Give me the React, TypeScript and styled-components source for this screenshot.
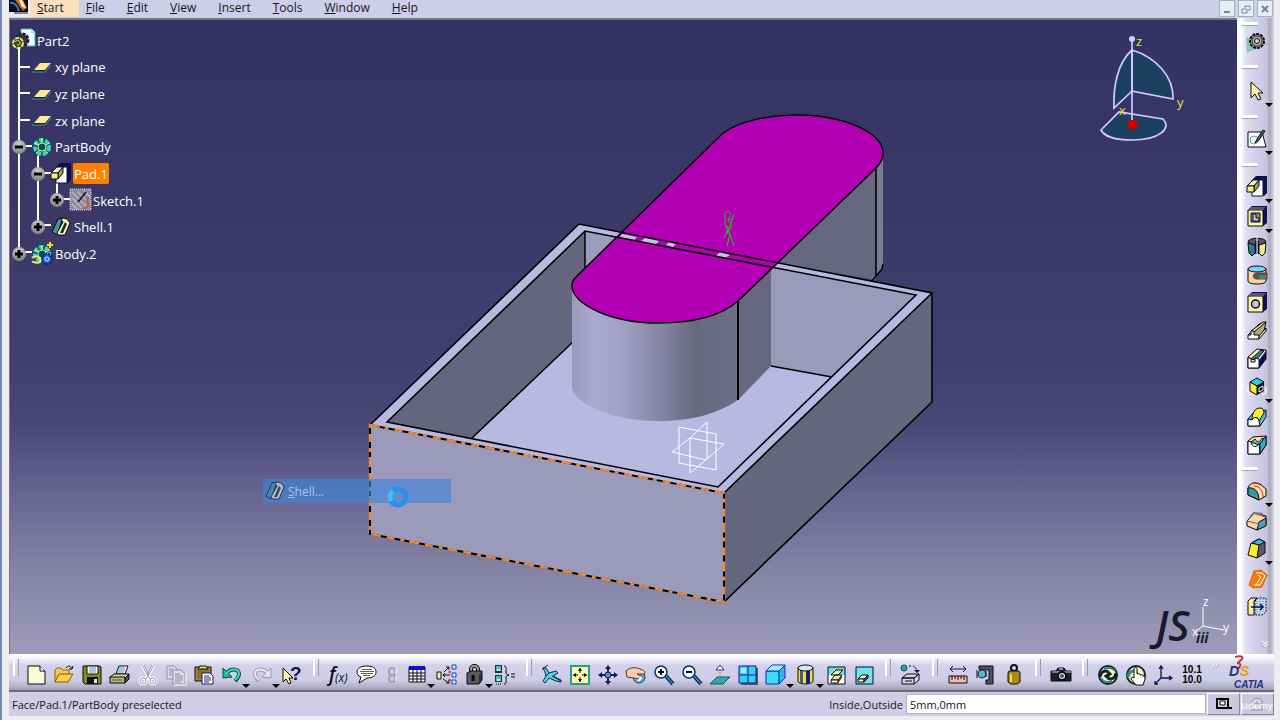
import React from "react";
import styled, { createGlobalStyle } from "styled-components";

const ui = `"Open Sans", "Noto Sans", sans-serif`;

const Global = createGlobalStyle`
  * { box-sizing: border-box; }
  body { margin: 0; font-family: ${ui}; font-size: 12px; color: #16161c; }
  button { font: inherit; color: inherit; border: 0; padding: 0; background: none; }
`;

const Frame = styled.div`
  display: flex;
  flex-direction: column;
  height: 100vh;
  overflow: hidden;
  padding: 0 6px 4px 7px;
  border-left: 2px solid #7388ae;
  background: #ededf1;
`;

const MenuBar = styled.header`
  display: flex;
  align-items: flex-start;
  height: 18px;
  background: #cfcee8;
`;

const MenuNav = styled.nav`
  display: flex;
  flex: 1;
`;

const MenuItem = styled.a<{ $active?: boolean }>`
  height: 17px;
  padding: 0 15px 0 7px;
  line-height: 16px;
  color: inherit;
  text-decoration: none;
  background: ${(p) => (p.$active ? "#fbdfbd" : "transparent")};
`;

const WindowButtons = styled.div`
  display: flex;
  gap: 3px;
  padding-right: 1px;
`;

const WindowButton = styled.button`
  display: grid;
  place-items: center;
  width: 16px;
  height: 17px;
  border: 1px solid #9fb4c4;
  background: #e6edf6;
`;

const Body = styled.div`
  display: flex;
  flex: 1;
  min-height: 0;
`;

const Viewport = styled.main`
  position: relative;
  flex: 1;
  min-width: 0;
  overflow: hidden;
  border-top: 2px solid #77777f;
  border-left: 1px solid #77777f;
  background: linear-gradient(#343263 0%, #3c3969 33%, #434071 55%, #4a4777 64%, #656390 74%, #8382a3 86%, #9e9cb9 100%);
`;

const Scene = styled.svg`
  display: block;
  width: 100%;
  height: 100%;
`;

const Compass = styled.svg`
  position: absolute;
  top: 10px;
  right: 47px;
`;

const Triad = styled.svg`
  position: absolute;
  right: 4px;
  bottom: 0;
`;

const Tree = styled.ul`
  position: absolute;
  top: 7px;
  left: 2px;
  display: grid;
  grid-auto-rows: 1fr;
  height: 240px;
  margin: 0;
  padding: 0;
  list-style: none;
  color: #fff;
  font-size: 13px;
`;

const TreeLines = styled.svg`
  position: absolute;
  top: 0;
  left: 0;
`;

const TreeRow = styled.li<{ $depth: number }>`
  position: relative;
  display: flex;
  align-items: center;
  padding-left: ${(p) => p.$depth * 19}px;
`;

const Toggle = styled.button`
  display: grid;
  place-items: center;
  width: 14px;
  height: 14px;
  margin-right: 4px;
  border-radius: 50%;
  background: radial-gradient(circle at 50% 30%, #cfcfcf, #6e6e70);
`;

const ToggleSpace = styled.span`
  width: 18px;
`;

const TreeIcon = styled.svg`
  position: relative;
  width: 24px;
  height: 24px;
`;

const TreeLabel = styled.span<{ $picked?: boolean }>`
  height: 21px;
  padding: 0 1px;
  border-radius: 2px;
  line-height: 22px;
  background: ${(p) => (p.$picked ? "#ff8000" : "transparent")};
`;

const ContextMenu = styled.div`
  position: absolute;
  top: 459px;
  left: 253px;
  width: 188px;
  background: rgba(62, 134, 220, 0.62);
`;

const ContextItem = styled.button`
  display: flex;
  align-items: center;
  gap: 1px;
  width: 100%;
  height: 24px;
  color: #b4c3e4;
`;

const Spinner = styled.svg`
  position: absolute;
  top: 2px;
  left: 119px;
  padding: 4px;
  overflow: visible;
`;

const Dock = styled.aside`
  display: flex;
  flex-direction: column;
  align-items: center;
  width: 37px;
  padding: 2px 0 0 3px;
  background: linear-gradient(90deg, #fff 0, #fff 4px, #dfdef0 9px, #d0cee8 20px, #c9c7e0 29px, #a9a8bb 33px, #dcdce6 37px);
`;

const DockGrip = styled.i<{ $size: number }>`
  align-self: flex-start;
  width: 18px;
  height: ${(p) => p.$size}px;
  padding-left: 2px;
  display: flex;
  align-items: center;
  &::after {
    content: "";
    flex: 1;
    height: 3px;
    border-bottom: 1px solid #a3a2b4;
    background: #fff;
  }
`;

const DockButton = styled.button<{ $drop?: boolean }>`
  position: relative;
  flex: none;
  width: 28px;
  height: ${(p) => (p.$drop ? 30 : 28)}px;
  padding: 1px 2px;
  display: flex;
`;

const Glyph = styled.svg`
  display: block;
  width: 24px;
  height: 24px;
  overflow: visible;
`;

const DropMark = styled.i`
  position: absolute;
  right: -2px;
  bottom: 1px;
  border: 4px solid transparent;
  border-top-color: #000;
  border-bottom: 0;
`;

const More = styled.button<{ $down?: boolean }>`
  width: 18px;
  margin: ${(p) => (p.$down ? "14px 0 0 20px" : "0")};
  color: #f4f4fc;
  font-size: 15px;
  line-height: 16px;
  text-shadow: 1px 1px #a7a6b8;
  transform: ${(p) => (p.$down ? "rotate(90deg)" : "none")};
`;

const ToolBar = styled.div`
  display: flex;
  align-items: flex-start;
  height: 38px;
  border-bottom: 2px solid #6c6b7c;
  background: linear-gradient(#fff 0, #f6f6fb 4px, #d3d2ea 11px, #cecce6 26px, #b3b1c6 33px, #9e9cb0 36px);
`;

const BarGrip = styled.i<{ $size: number }>`
  flex: none;
  display: flex;
  justify-content: center;
  width: ${(p) => p.$size}px;
  height: 22px;
  padding-top: 5px;
  &::after {
    content: "";
    width: 3px;
    border-left: 2px solid #fff;
    border-right: 1px solid #9c9bae;
  }
`;

const ToolGroup = styled.div`
  display: flex;
  padding-top: 7px;
`;

const ToolButton = styled.button<{ $drop?: boolean; $slim?: boolean }>`
  position: relative;
  flex: none;
  display: block;
  width: ${(p) => (p.$drop ? 30 : p.$slim ? 22 : 28)}px;
  height: 28px;
  padding: 2px ${(p) => (p.$slim ? 0 : 2)}px;
`;

const Coordinates = styled.span`
  display: grid;
  font: bold 10px/10px "Liberation Sans", Arial, sans-serif;
  color: #000;
`;

const Brand = styled.svg`
  margin-left: auto;
  margin-right: 3px;
`;

const StatusBar = styled.footer`
  display: flex;
  align-items: center;
  height: 24px;
  padding-left: 3px;
  background: #cfcee6;
  font-size: 11px;
`;

const Message = styled.output`
  flex: 1;
`;

const PowerLabel = styled.label`
  padding-right: 3px;
`;

const PowerInput = styled.input`
  width: 300px;
  height: 20px;
  padding: 0 3px;
  border: 1px solid #b5b4c8;
  background: #fff;
  font: inherit;
  color: inherit;
`;

const StatusButton = styled.button`
  position: relative;
  display: grid;
  place-items: center;
  width: 33px;
  height: 22px;
  margin-left: 1px;
  border: 1px solid;
  border-color: #fff #85849a #85849a #fff;
  background: #c9c8dc;
`;

const Watermark = styled.span`
  position: absolute;
  right: 0;
  bottom: 1px;
  color: rgba(255, 255, 255, 0.75);
  font: bold 9px/14px ${ui};
`;

const k = "#0a0a14";
const navy = "#10104e";
const cream = "#fdf6a8";

const cubeBack = (
  <>
    <path d="M4 4L7 1H22V18L18 21H3V5Z" fill={navy} />
    <path d="M3 5H18V21H3Z" fill={cream} stroke={k} />
    <path d="M3 5L6 2H21L18 5Z" fill="#56567a" />
  </>
);

const gear = (
  <>
    <circle cx="12" cy="12" r="9" fill="#14627a" stroke="#0c4a66" strokeWidth="2" strokeDasharray="3 3" />
    <circle cx="12" cy="12" r="7" fill="none" stroke="#3fd8b0" strokeWidth="4" strokeDasharray="4 2" />
    <circle cx="12" cy="12" r="4" fill="#0a4a68" stroke="#c8ee74" strokeWidth="1" />
    <path d="M4 8L9 10M20 8L15 10M12 3V8M6 18L10 15M18 18L14 15" stroke="#d8f08a" />
  </>
);

const shellShape = (
  <>
    <path d="M3 17L9 4L14 3L8 20Z" fill="#42929c" stroke={k} />
    <path d="M14 3L18 4L21 8L16 20H9L8 18L14 7L12 4Z" fill={cream} stroke={k} />
    <path d="M11 18L16 7L18 9L14 18Z" fill="#23235a" />
  </>
);

const padShape = (
  <>
    <path d="M8 4L11 1H22V18L19 21H8Z" fill={navy} />
    <path d="M7 5H18V21H7Z" fill="#fff" stroke={navy} />
    <path d="M2 11L8 5H14L9 11Z" fill="#fffbd0" stroke={k} />
    <path d="M9 11L14 5V11L9 17Z" fill="#a3a05c" stroke={k} />
    <path d="M2 11H9V17H2Z" fill="#f8f07c" stroke={k} />
  </>
);

const icons: Record<string, React.ReactNode> = {
  newDoc: (
    <>
      <path d="M4 3H16L21 8V21H4Z" fill="#fdf9d4" stroke={k} />
      <path d="M16 3V8H21" fill="#fff" stroke={k} />
    </>
  ),
  open: (
    <>
      <path d="M3 19V7L5 5H9L11 7H17V11" fill="#f3c95c" stroke="#8a6410" />
      <path d="M3 19L7 11H21L16 19Z" fill="#ffcf4a" stroke="#7a560c" />
      <path d="M14 5C16 2 19 3 20 6M20 6L17 6M20 6L21 3" fill="none" stroke={k} />
    </>
  ),
  save: (
    <>
      <path d="M3 3H20L21 4V21H5L3 19Z" fill="#8a8a20" stroke={k} />
      <path d="M7 3H18V11H7Z" fill="#fff" stroke={k} />
      <path d="M9 5H16M9 7H16M9 9H16" stroke="#5f92b8" />
      <path d="M7 14H18V21H7Z" fill="#111" />
      <path d="M14 16H17V20H14Z" fill="#e8e8e8" />
    </>
  ),
  print: (
    <>
      <path d="M8 11L11 3H20L17 11Z" fill="#fff" stroke={k} />
      <path d="M11 5H17M10 7H17M9 9H16" stroke="#49a" />
      <path d="M2 14L6 11H21L17 15H2Z" fill="#d8d8a0" stroke={k} />
      <path d="M2 14H17V20H2Z" fill="#b8b870" stroke={k} />
      <path d="M17 15L21 11V16L17 20Z" fill="#55552a" stroke={k} />
      <path d="M4 17H14" stroke="#555" />
    </>
  ),
  cut: (
    <g fill="none" stroke="#fff" strokeWidth="3">
      <path d="M6 2L14 16M18 2L10 16" />
      <circle cx="7" cy="18" r="3" /><circle cx="17" cy="18" r="3" />
      <g stroke="#9b9aad" strokeWidth="1">
        <path d="M6 2L14 16M18 2L10 16M8 2L13 12M16 2L11 12" />
        <circle cx="7" cy="18" r="3" /><circle cx="17" cy="18" r="3" />
      </g>
    </g>
  ),
  copy: (
    <g fill="#dddceb" stroke="#8f8ea2">
      <path d="M3 3H10L13 6V16H3Z" />
      <path d="M9 7H17L21 11V21H9Z" />
      <path d="M5 6H9M5 8H9M5 10H8M5 12H8M11 11H16M11 13H19M11 15H19M11 17H19M11 19H17" />
      <path d="M22 11V22H10" fill="none" stroke="#fff" />
    </g>
  ),
  paste: (
    <>
      <path d="M3 4H19V18H3Z" fill="#b08a3c" stroke={k} />
      <path d="M5 6H17V16H5Z" fill="#8d7028" />
      <path d="M6 6L8 3H14L16 6Z" fill="#eee27c" stroke={k} />
      <path d="M10 10H18L21 13V21H10Z" fill="#fff" stroke="#181858" />
      <path d="M12 13H17M12 15H19M12 17H19M12 19H17" stroke="#22227a" />
    </>
  ),
  undo: (
    <>
      <path d="M6 11C10 5 19 5 19 11C19 14 17 16 15 18" fill="none" stroke="#0d4c46" strokeWidth="4" />
      <path d="M3 5V15L12 14Z" fill="#20b890" stroke="#0d4c46" />
      <path d="M6 11C10 5 19 5 19 11C19 14 17 15 15 17" fill="none" stroke="#3fe0ae" strokeWidth="2" />
    </>
  ),
  redo: (
    <>
      <path d="M18 11C14 5 5 5 5 11C5 14 7 16 9 18" fill="none" stroke="#9b9aac" strokeWidth="4" />
      <path d="M21 5V15L12 14Z" fill="#e2e1ee" stroke="#9b9aac" />
      <path d="M18 11C14 5 5 5 5 11C5 14 7 15 9 17" fill="none" stroke="#e9e8f4" strokeWidth="2" />
    </>
  ),
  help: (
    <>
      <path d="M3 5V19L6 16L9 21L11 20L9 15H13Z" fill={cream} stroke={k} />
      <text x="10" y="17" fontFamily="Liberation Sans" fontWeight="bold" fontSize="19" fill="#12125c">?</text>
    </>
  ),
  formula: (
    <>
      <text x="2" y="18" fontFamily="Open Sans" fontStyle="italic" fontWeight="600" fontSize="19" fill={k}>f</text>
      <text x="8" y="19" fontFamily="Open Sans" fontStyle="italic" fontSize="12" fill={k}>(x)</text>
    </>
  ),
  speech: (
    <>
      <path d="M12 3C18 3 21 5 21 9C21 13 17 15 12 15L4 20L6 14C3 13 2 11 2 9C2 5 6 3 12 3Z" fill="#fff" stroke={k} />
      <path d="M7 6.5H17M5 8.5H19M6 10.5H18M8 12.5H15" stroke="#33333c" strokeWidth="0.8" />
    </>
  ),
  link: (
    <g fill="none" stroke="#a5a4b6" strokeWidth="2">
      <rect x="8" y="5" width="6" height="7" rx="3" /><rect x="8" y="12" width="6" height="7" rx="3" />
      <path d="M15 6V11M15 13V18" stroke="#fff" strokeWidth="1" />
    </g>
  ),
  table: (
    <>
      <path d="M4 4H20V19H4Z" fill="#fff" stroke={k} />
      <path d="M4 3H20V7H4Z" fill="#1010c8" />
      <path d="M4 10H20M4 13H20M4 16H20M8 7V19M12 7V19M16 7V19" stroke={k} />
    </>
  ),
  relations: (
    <>
      <path d="M2 9H6V16H2Z" fill="#f8ee92" stroke={k} />
      <g fill="#cfe6ff" stroke="#1c44c4" strokeWidth="1">
        <path d="M17 2H21V6H17ZM17 10H21V14H17ZM17 17H21V21H17Z" />
      </g>
      <path d="M9 9L14 4M11 4H14V7M8 12H15M10 10L8 12L10 14M8 16L14 20M14 17V20H11" fill="none" stroke={k} />
      <path d="M13 9H16M13 17H16M15 8V10M15 16V18" stroke="#d02020" />
    </>
  ),
  lock: (
    <>
      <path d="M8 11V6C8 2 15 2 15 6V11" fill="none" stroke={k} strokeWidth="4" />
      <path d="M8 11V6C8 2 15 2 15 6V11" fill="none" stroke="#9c9c9c" strokeWidth="2" />
      <path d="M4 10L8 8H19V17L16 21H4Z" fill="#5c5c5c" stroke={k} />
      <path d="M16 12L19 8V17L16 21Z" fill="#2c2c2c" />
      <path d="M10 12V18" stroke={k} strokeWidth="3" />
    </>
  ),
  equality: (
    <>
      <path d="M2 2H9V10H2ZM2 12H9V19H2Z" fill="#17353c" />
      <path d="M3 3H8V8H3ZM3 13H8V18H3Z" fill="#3ec0c8" />
      <path d="M4 6H7V8H4ZM4 16H7V18H4Z" fill="#f6e478" />
      <path d="M11 3C14 3 13 6 13 9C13 11 14 12 16 12C14 12 13 13 13 15C13 19 14 21 11 21M18 11H22M18 14H22" fill="none" stroke={k} />
      <path d="M3 21H9" stroke={k} strokeDasharray="1 1" />
    </>
  ),
  fly: (
    <>
      <path d="M3 5L6 5L9 10L16 8L18 10L13 13L17 15L21 17L21 19L16 18L9 15L5 20L3 18L6 13L5 9Z" fill="#54d6ea" stroke="#0c2a44" />
      <path d="M9 10L6 13M2 6L8 2M12 13L21 18" stroke="#0c2a44" fill="none" />
    </>
  ),
  fitAll: (
    <>
      <path d="M3 3H21V21H3Z" fill="#fdf9a4" stroke="#1fa094" strokeWidth="2" />
      <path d="M12 5V10M12 14V19M5 12H10M14 12H19" stroke={k} />
      <path d="M12 5L14 8H10ZM12 19L10 16H14ZM5 12L8 10V14ZM19 12L16 14V10Z" fill={k} />
    </>
  ),
  pan: (
    <>
      <path d="M12 4V20M4 12H20" stroke="#10205a" strokeWidth="2" />
      <path d="M12 2L15 6H9ZM12 22L9 18H15ZM2 12L6 9V15ZM22 12L18 15V9Z" fill="#10205a" />
      <circle cx="12" cy="12" r="3" fill="#5b86c4" stroke="#10205a" />
    </>
  ),
  rotate: (
    <>
      <circle cx="15" cy="14" r="6" fill="#58b4dc" stroke="#123a7a" />
      <path d="M2 8C6 4 12 4 16 6C20 7 22 9 20 11L13 11L19 14C18 16 14 16 10 15L3 14Z" fill="#f7cdb8" stroke="#6a2c20" />
      <path d="M14 18L18 14" stroke="#fff" strokeWidth="2" />
    </>
  ),
  zoomIn: (
    <>
      <path d="M14 13L21 21" stroke="#0c2c66" strokeWidth="4" /><path d="M14 13L21 21" stroke="#6cc6ec" strokeWidth="1" />
      <circle cx="9" cy="9" r="6" fill="#eefcff" stroke="#0c2c66" strokeWidth="1.5" />
      <path d="M6 9H12M9 6V12" stroke={k} strokeWidth="2" />
    </>
  ),
  zoomOut: (
    <>
      <path d="M14 13L21 21" stroke="#0c2c66" strokeWidth="4" /><path d="M14 13L21 21" stroke="#6cc6ec" strokeWidth="1" />
      <circle cx="9" cy="9" r="6" fill="#eefcff" stroke="#0c2c66" strokeWidth="1.5" />
      <path d="M6 9H12" stroke={k} strokeWidth="2" />
    </>
  ),
  normal: (
    <>
      <path d="M2 21L9 14H22L15 21Z" fill="#2fa8b4" stroke="#0e5a62" />
      <path d="M12 17V7" stroke="#c07818" strokeDasharray="2 1" strokeWidth="1" />
      <path d="M12 2L16 7H8Z" fill="#fff" stroke="#2a2a88" />
    </>
  ),
  quad: (
    <>
      <path d="M5 5H22V22H5Z" fill="#55546c" />
      <path d="M3 3H20V20H3Z" fill="#36d0f2" stroke="#1414a4" />
      <path d="M12 3V20M3 12H20" stroke="#1414a4" strokeWidth="1" />
      <path d="M5 5H10V10H5Z" fill="#a6ecfa" />
    </>
  ),
  iso: (
    <g stroke="#1230b8">
      <path d="M2 8H15V21H2Z" fill="#3fdcf6" />
      <path d="M2 8L8 2H21L15 8Z" fill="#a4f0fc" />
      <path d="M15 8L21 2V15L15 21Z" fill="#2fb4ea" />
    </g>
  ),
  shading: (
    <>
      <path d="M4 5V18C4 22 19 22 19 18V5Z" fill="#f1e33c" stroke={k} />
      <path d="M12 6H16V21H12Z" fill="#1a1a86" /><path d="M6 7H9V20H6Z" fill="#5a5a6e" />
      <ellipse cx="11.5" cy="5" rx="7.5" ry="3" fill="#c8eef4" stroke={k} />
    </>
  ),
  hide: (
    <>
      <path d="M4 4H21V21H4Z" fill="#6fe2ee" />
      <path d="M4 12H21V21H4Z" fill="#fff" />
      <path d="M7 12L12 7H19L14 12ZM7 17L11 12H18L14 17Z" fill="#f8ec96" stroke={k} />
      <path d="M14 17L18 12V15L14 20Z" fill="#444" /><path d="M7 17H14V20H7Z" fill="#fff" stroke={k} />
      <path d="M4 4H21V21H4Z" fill="none" stroke={k} />
    </>
  ),
  swap: (
    <>
      <path d="M4 4H21V21H4Z" fill="#6fe2ee" stroke={k} />
      <path d="M6 16L10 12H16L12 16Z" fill="#fdf6b4" stroke={k} />
      <path d="M6 16H12V19H6Z" fill="#fff" stroke={k} /><path d="M12 16L16 12V15L12 19Z" fill="#555" stroke={k} />
    </>
  ),
  apply: (
    <>
      <circle cx="5" cy="5" r="3" fill="#2ea6a6" stroke="#0c4a5a" />
      <path d="M10 3H12M14 3L17 5L18 9" fill="none" stroke={navy} strokeDasharray="2 1" />
      <path d="M15 7H21L18 10Z" fill={navy} />
      <path d="M3 15L8 11H20L15 15ZM3 15H15V21H3ZM15 15L20 11V17L15 21" fill="#d5d4e4" stroke={k} />
      <path d="M6 18H13" stroke={k} />
    </>
  ),
  ruler: (
    <>
      <path d="M4 6H20M7 3L4 6L7 9M17 3L20 6L17 9" fill="none" stroke={navy} />
      <path d="M3 13H21V20H3Z" fill="#f8b8b0" stroke={k} />
      <path d="M6 13V17M9 13V16M12 13V17M15 13V16M18 13V17" stroke={k} />
    </>
  ),
  caliper: (
    <>
      <path d="M5 3H19V21H12V17H15V7H8L5 6Z" fill="#4b5560" stroke={k} />
      <circle cx="8" cy="11" r="4" fill="#55bccb" stroke="#0e3a4c" />
      <path d="M3 7V15M12 8V14" stroke={k} />
    </>
  ),
  weight: (
    <>
      <circle cx="12" cy="5" r="3" fill="none" stroke={k} strokeWidth="2" />
      <path d="M7 8H17L18 10V19L15 21H9L6 19V10Z" fill="#a98b16" stroke={k} />
      <path d="M9 11V19" stroke="#f0da5c" strokeWidth="2" />
    </>
  ),
  camera: (
    <>
      <path d="M2 8H7L9 5H15L17 8H22V18H2Z" fill="#20202a" stroke={k} />
      <path d="M3 9H22" stroke="#d8d8e4" strokeWidth="1" />
      <circle cx="13" cy="13" r="4" fill="#e8f0f4" stroke={k} strokeWidth="2" /><circle cx="13" cy="13" r="2" fill="#3a5c78" />
      <path d="M10 6H14" stroke="#fff" />
    </>
  ),
  update: (
    <>
      <circle cx="12" cy="12" r="9" fill={cream} stroke="#0a2630" strokeWidth="2" />
      <path d="M4 14C5 7 11 7 13 10C14 13 10 14 9 12M20 10C19 17 13 17 11 14C10 12 14 10 15 12" fill="none" stroke="#0a2630" strokeWidth="3" />
      <path d="M5 15C7 19 12 20 16 18M19 8C17 5 12 4 8 6" fill="none" stroke="#2a8c96" strokeWidth="2" />
    </>
  ),
  manual: (
    <>
      <circle cx="12" cy="12" r="9" fill={cream} stroke="#0a2630" strokeWidth="2" />
      <path d="M4 14C5 7 11 7 13 10" fill="none" stroke="#2a8c96" strokeWidth="3" />
      <path d="M10 15V6C10 4 13 4 13 6V11C15 10 16 11 16 12C18 11 19 12 19 13C21 13 21 14 21 16L19 22H12L7 16C7 14 9 14 10 15Z" fill="#fff" stroke={k} />
    </>
  ),
  axis: (
    <path d="M9 3V15H20M9 15L3 21M7 6L9 3L11 6M17 13L20 15L17 17M3 18V21H6" fill="none" stroke={navy} strokeWidth="1.3" />
  ),
  workbench: (
    <>
      <path d="M1 8L23 15L2 24Z" fill="#86c8b8" />
      <circle cx="12" cy="12" r="7" fill="#9a9a90" stroke={k} strokeWidth="2" strokeDasharray="3 1" />
      <circle cx="12" cy="12" r="5" fill="#b4b4a8" stroke="#303030" /><circle cx="12" cy="12" r="2.5" fill="#d4d4e4" stroke={k} />
    </>
  ),
  select: <path d="M6 3V19L10 15L13 21L16 20L13 14H18Z" fill={cream} stroke={k} />,
  sketch: (
    <>
      <path d="M3 5H17L21 20H3Z" fill="#fff" stroke={k} />
      <circle cx="9" cy="13" r="4" fill="none" stroke="#4aa890" />
      <path d="M18 3L12 12L10 16L14 13L20 4Z" fill="#496878" stroke={k} />
    </>
  ),
  pad: padShape,
  pocket: (
    <>
      {cubeBack}
      <path d="M6 8H15V17H6Z" fill="#8c8ca8" stroke={k} />
      <path d="M8 9H11V13H14V16H8Z" fill="#cdcdea" stroke={k} />
    </>
  ),
  shaft: (
    <>
      <path d="M3 7C3 2 21 2 21 7L17 10H7Z" fill="#555566" stroke={k} />
      <path d="M3 8L10 10V18L7 21L4 18Z" fill="#2c7c90" stroke={k} />
      <path d="M21 8L14 10V18L17 21L20 18Z" fill="#f4ec86" stroke={k} />
      <path d="M10 6H14V19H10Z" fill={navy} /><path d="M12 1V21" stroke="#fff" />
    </>
  ),
  groove: (
    <>
      <path d="M3 6V18C3 22 21 22 21 18V6Z" fill="#fbd79a" stroke={k} />
      <ellipse cx="12" cy="6" rx="9" ry="3" fill="#6cdcf4" stroke={k} />
      <path d="M22 10H12C7 10 7 16 12 16H22Z" fill="#56566a" stroke="#a02020" /><path d="M14 12H21V16H14Z" fill="#2c9080" />
    </>
  ),
  hole: (
    <>
      {cubeBack}
      <circle cx="10.5" cy="13" r="4" fill="#c8c8dc" stroke={k} strokeWidth="1.5" />
    </>
  ),
  rib: (
    <>
      <path d="M3 16L14 5L21 3L19 12L12 20Z" fill="#aaa890" stroke={k} />
      <path d="M6 12L18 3H21L9 13Z" fill="#f2ea7c" stroke={k} />
      <path d="M3 16H6V12H9V16H14V20H3Z" fill="#fff" stroke={k} /><path d="M14 17L21 9V12L14 20Z" fill="#f2ea7c" stroke={k} />
    </>
  ),
  slot: (
    <>
      <path d="M3 10L12 2L21 3V12L14 21H3Z" fill="#f6efaa" stroke={k} />
      <path d="M6 12L16 3L19 4L11 13Z" fill="#2c7ca0" stroke={k} />
      <path d="M3 11H6V15H10V11L14 12V21H3Z" fill="#fff" stroke={k} /><path d="M14 13L21 4V12L14 21Z" fill={navy} />
    </>
  ),
  stiffener: (
    <>
      <path d="M5 7L12 3L19 7L12 11Z" fill="#2fd0d8" stroke={k} />
      <path d="M5 7L12 11V20L5 16Z" fill="#f6ea34" stroke={k} />
      <path d="M19 7L12 11V20L19 16Z" fill={k} />
      <path d="M14 13L18 11V15L14 17ZM3 12V18L7 20M21 12V18L17 20" fill="none" stroke="#fff" />
    </>
  ),
  multiPad: (
    <>
      <path d="M3 14L9 7L21 5V12L15 21H3Z" fill="#4ec4dc" stroke={k} />
      <path d="M7 15C7 8 10 3 15 3C18 3 19 5 19 8L14 16C13 11 10 12 7 15Z" fill="#f6ea34" stroke={k} />
      <path d="M3 14L7 15C9 11 13 12 14 16L15 21H3Z" fill="#fff" stroke={k} />
    </>
  ),
  multiPocket: (
    <>
      <path d="M3 8L8 4L21 3V12L15 21H3Z" fill="#f6ee8c" stroke={k} />
      <path d="M6 9L10 6C12 10 15 9 17 5L19 6L14 12Z" fill="#4ec4e8" stroke={k} />
      <path d="M3 8L6 9C7 15 12 15 14 10L15 21H3Z" fill="#fff" stroke={k} /><path d="M15 11L21 3V12L15 21Z" fill="#2fb0c8" stroke={k} />
    </>
  ),
  fillet: (
    <>
      <path d="M3 9C5 3 11 3 15 5L21 10V17L14 21L3 16Z" fill="#fad9a8" stroke={k} />
      <path d="M3 9C9 8 14 12 14 21L3 16Z" fill="#3c949c" stroke={k} />
      <path d="M5 6C9 3 12 4 15 6M9 7C14 7 18 11 18 18" fill="none" stroke="#c03020" />
    </>
  ),
  chamfer: (
    <>
      <path d="M2 12L9 4L21 7V16L12 21L2 17Z" fill="#fad9a8" stroke={k} />
      <path d="M12 21L14 13L21 9V17Z" fill="#4c9cc0" stroke={k} />
      <path d="M2 12L14 15M9 4L20 8" fill="none" stroke="#b84838" /><path d="M5 8L9 4L18 5" fill="none" stroke="#777" strokeWidth="2" />
    </>
  ),
  draft: (
    <>
      <path d="M8 5L14 2L20 5V16L12 21Z" fill="#59596e" stroke={k} />
      <path d="M7 6L14 2L20 5L14 8Z" fill="#44b8da" stroke={k} />
      <path d="M6 6L14 8L12 21L3 18Z" fill="#f8ee26" stroke={k} />
    </>
  ),
  shell: (
    <>
      <path d="M4 18L9 4L16 3L22 8L17 20L8 21Z" fill="#f47c10" stroke="#e06800" />
      <path d="M11 6H17L20 9L15 18H9M13 8L16 10L11 18" fill="none" stroke="#fff" />
    </>
  ),
  thickness: (
    <>
      <path d="M3 6L6 3H12L9 6V20H3Z" fill="#f8f09c" stroke={k} />
      <path d="M10 6L13 3H21V17L17 20H10Z" fill="#c6e0f0" stroke={navy} strokeDasharray="2 1" />
      <path d="M12 4V19M15 4V19M18 4V18" stroke="#40889c" strokeDasharray="1 1" />
      <path d="M6 12H18M15 9L18 12L15 15" fill="none" stroke={navy} strokeWidth="1.5" />
    </>
  ),
  plane: (
    <>
      <path d="M3 17L10 9H21L14 17Z" fill="#18183c" />
      <path d="M4 15L10 8H21L15 15Z" fill="#fbe994" /><path d="M2 17H15L21 10" fill="none" stroke="#3c9aa8" />
    </>
  ),
  root: (
    <>
      <path d="M9 1H20L23 4V18H9Z" fill="#f6ffff" stroke="#35b4c8" /><path d="M19 1V5H23" fill="#9fdce6" />
      <circle cx="10" cy="12" r="6" fill="#3a3448" stroke="#22202c" strokeWidth="3" strokeDasharray="3 1" />
      <circle cx="6" cy="15" r="5" fill="#31442c" stroke="#f4e562" strokeWidth="2" strokeDasharray="4 1" />
      <path d="M3 14C5 11 9 13 8 16C7 18 5 17 5 16" fill="none" stroke="#f4e562" />
    </>
  ),
  body: gear,
  body2: (
    <>
      {gear}
      <path d="M17 3H23M20 0V6" stroke="#ffe600" strokeWidth="2" />
      <circle cx="17" cy="17" r="5" fill="#2060e0" stroke="#08207c" strokeWidth="2" strokeDasharray="2 1" /><circle cx="17" cy="17" r="2" fill="none" stroke="#cfe6ff" />
      <path d="M2 16C6 12 12 16 10 20C6 22 4 19 2 20" fill="none" stroke="#f0e46c" strokeWidth="2" />
    </>
  ),
  sketchNode: (
    <>
      <path d="M2 1H23V22H2Z" fill="#8a899c" />
      <path d="M2 1H23V22H2Z" fill="none" stroke="#e6e6ee" strokeDasharray="1 1" />
      <path d="M4 4L20 20M4 10L14 20M10 4L21 15M4 16L9 21M16 3L22 9" stroke="#d4d4e0" strokeDasharray="1 1" strokeWidth="2" />
      <path d="M18 4L10 14" stroke="#22202c" strokeWidth="2" /><path d="M21 10C16 11 22 15 20 18C18 21 15 20 15 20" fill="none" stroke="#c8583c" strokeWidth="2" />
    </>
  ),
  shellNode: shellShape,
};

type Tool = { id: string; label: string; drop?: boolean; slim?: boolean };
const tool = (id: string, label: string, opt: Partial<Tool> = {}): Tool => ({ id, label, ...opt });
const drop = { drop: true };

const barGroups: Tool[][] = [
  [
    tool("newDoc", "New"), tool("open", "Open"), tool("save", "Save"), tool("print", "Print"), tool("cut", "Cut"),
    tool("copy", "Copy"), tool("paste", "Paste"), tool("undo", "Undo", drop), tool("redo", "Redo", drop), tool("help", "What's This?"),
  ],
  [
    tool("formula", "Formula"), tool("speech", "Comment"), tool("link", "Link", { slim: true }), tool("table", "Design Table", drop),
    tool("relations", "Relations"), tool("lock", "Lock", drop), tool("equality", "Equivalent Dimensions"),
  ],
  [
    tool("fly", "Fly Mode"), tool("fitAll", "Fit All In"), tool("pan", "Pan"), tool("rotate", "Rotate"), tool("zoomIn", "Zoom In"),
    tool("zoomOut", "Zoom Out"), tool("normal", "Normal View"), tool("quad", "Create Multi-View"), tool("iso", "Isometric View", drop),
    tool("shading", "Shading with Edges", drop), tool("hide", "Hide/Show"), tool("swap", "Swap Visible Space"),
  ],
  [tool("apply", "Apply Material")],
  [tool("ruler", "Measure Between"), tool("caliper", "Measure Item"), tool("weight", "Measure Inertia")],
  [tool("camera", "Capture")],
  [tool("update", "Update All"), tool("manual", "Manual Update"), tool("axis", "Axis System")],
];

const dockGroups: { grip: number; tools: Tool[] }[] = [
  { grip: 8, tools: [tool("workbench", "Part Design")] },
  { grip: 22, tools: [tool("select", "Select", drop)] },
  { grip: 18, tools: [tool("sketch", "Sketch", drop)] },
  {
    grip: 18,
    tools: [
      tool("pad", "Pad", drop), tool("pocket", "Pocket", drop), tool("shaft", "Shaft"), tool("groove", "Groove"), tool("hole", "Hole"),
      tool("rib", "Rib"), tool("slot", "Slot"), tool("stiffener", "Stiffener", drop), tool("multiPad", "Multi-sections Solid"),
      tool("multiPocket", "Removed Multi-sections Solid"),
    ],
  },
  {
    grip: 18,
    tools: [
      tool("fillet", "Edge Fillet", drop), tool("chamfer", "Chamfer"), tool("draft", "Draft Angle", drop), tool("shell", "Shell"),
      tool("thickness", "Thickness"),
    ],
  },
];

type TreeNode = { label: string; icon: string; depth: number; state?: "open" | "closed" | "leaf"; picked?: boolean };
const nodes: TreeNode[] = [
  { label: "Part2", icon: "root", depth: 0 },
  { label: "xy plane", icon: "plane", depth: 0, state: "leaf" },
  { label: "yz plane", icon: "plane", depth: 0, state: "leaf" },
  { label: "zx plane", icon: "plane", depth: 0, state: "leaf" },
  { label: "PartBody", icon: "body", depth: 0, state: "open" },
  { label: "Pad.1", icon: "pad", depth: 1, state: "open", picked: true },
  { label: "Sketch.1", icon: "sketchNode", depth: 2, state: "closed" },
  { label: "Shell.1", icon: "shellNode", depth: 1, state: "closed" },
  { label: "Body.2", icon: "body2", depth: 0, state: "closed" },
];

const menus = ["Start", "File", "Edit", "View", "Insert", "Tools", "Window", "Help"];

function SpecificationTree() {
  return (
    <Tree>
      {nodes.map((n) => (
        <TreeRow key={n.label} $depth={n.depth}>
          {n.label === "Part2" && (
            <TreeLines width="60" height="240" aria-hidden="true">
              <path d="M7 20V222M26 128V196M45 154V170M7 40H18M7 66H18M7 93H18M7 119H20M26 146H39M45 172H58M26 198H39M7 225H20" fill="none" stroke="#fff" strokeWidth="2" />
            </TreeLines>
          )}
          {n.state === "leaf" && <ToggleSpace />}
          {(n.state === "open" || n.state === "closed") && (
            <Toggle aria-label={(n.state === "open" ? "Collapse " : "Expand ") + n.label}>
              <svg width="10" height="10" viewBox="0 0 10 10">
                <path d={n.state === "open" ? "M1 5H9" : "M1 5H9M5 1V9"} stroke="#000" strokeWidth="3" />
              </svg>
            </Toggle>
          )}
          <TreeIcon viewBox="0 0 24 24">{icons[n.icon]}</TreeIcon>
          <TreeLabel $picked={n.picked}>{n.label}</TreeLabel>
        </TreeRow>
      ))}
    </Tree>
  );
}

function Model() {
  return (
    <Scene viewBox="10 20 1227 634" preserveAspectRatio="xMidYMid slice" role="img" aria-label="Part2 model">
      <defs>
        <linearGradient id="cylinder" gradientUnits="userSpaceOnUse" x1="572" x2="738" y1="0" y2="0">
          <stop offset="0" stopColor="#9b99bd" />
          <stop offset="0.14" stopColor="#aba9d0" />
          <stop offset="0.3" stopColor="#a2a0c5" />
          <stop offset="0.5" stopColor="#8a89a8" />
          <stop offset="0.75" stopColor="#68687f" />
          <stop offset="1" stopColor="#6e6e88" />
        </linearGradient>
      </defs>
      <path d="M771 262L876 168L883 153V267L875 280Z" fill="#67677f" />
      <path d="M877 167L883 156V267L877 275Z" fill="#7b7b94" />
      <path d="M876 168V276M883 264L882 269L872 281" fill="none" stroke="#000" strokeWidth="1.5" />
      <path d="M370 425L579 224L932 293L724 493Z" fill="#b9b8e0" />
      <path d="M387 422L585 231V330L472 438Z" fill="#65657d" />
      <path d="M585 231L640 241V300H585Z" fill="#9e9cbc" />
      <path d="M760 265L916 295L832 377L760 364Z" fill="#9c9aba" />
      <path d="M771 366L832 377M585 231V272M472 438L575 340" fill="none" stroke="#000" strokeWidth="1.5" />
      <path d="M724 493L932 293V402L724 602Z" fill="#66667e" />
      <path d="M370 425L724 493V602L370 534Z" fill="#9c9aba" />
      <path d="M738 301L771 266V366L738 400Z" fill="#67677f" />
      <path d="M572 284L738 301V400C715 415 690 421 658 421C612 421 572 403 572 386Z" fill="url(#cylinder)" />
      <path d="M738 301V400" stroke="#000" strokeWidth="2" />
      <path d="M575 278L722 134C738 121 768 115 800 115C848 116 883 134 883 153C883 159 880 164 876 168L738 301C722 315 694 323 658 323C610 323 573 304 572 286C572 283 573 280 575 278Z" fill="#b400b4" stroke="#000" strokeWidth="1.5" />
      <path d="M622 234L637 237L634 240L620 237ZM645 238L659 241L655 245L641 241ZM669 242L676 244L673 247L666 245ZM720 252L730 255L725 258L716 256Z" fill="#c4c3e6" />
      <path d="M370 425L579 224L932 293V402L724 602M932 293L724 493M387 422L585 231L916 295L718 487Z" fill="none" stroke="#000" strokeWidth="1.6" />
      <path d="M370 425L724 493V602L370 534Z" fill="none" stroke="#000" strokeWidth="2" />
      <path d="M370 425L724 493V602L370 534Z" fill="none" stroke="#f08a32" strokeWidth="2.4" strokeDasharray="10 5 4 6 8 6" />
      <g fill="none" stroke="#fff">
        <path d="M679 427L716 434V470L679 463Z" /><path d="M690 473V438L707 422V459Z" /><path d="M672 452L690 438L724 444L706 460Z" />
      </g>
      <g fill="none" stroke="#20c020">
        <path d="M725 213C729 209 733 214 729 218C725 222 733 222 731 228L728 232M725 213V224L729 229L734 214M728 220L733 219" />
        <path d="M728 229L724 238M728 229L734 246M730 234L727 246M726 225L728 234" />
      </g>
    </Scene>
  );
}

function ToolIcon({ id }: { id: string }) {
  return <Glyph viewBox="0 0 24 24" aria-hidden="true">{icons[id]}</Glyph>;
}

export default function App() {
  return (
    <>
      <Global />
      <Frame>
        <MenuBar>
          <svg width="21" height="17" viewBox="0 0 21 17" aria-hidden="true">
            <path d="M0 0H21V17H0Z" fill="#e9e9f2" />
            <path d="M0 0H19V12H0Z" fill="#0b0f22" />
            <path d="M6 0H14L18 8L14 11Z" fill="#d0641c" /><path d="M10 0H13L17 8L13 7Z" fill="#fff3cc" />
            <path d="M1 3C5 2 9 6 10 11" stroke="#3d79b8" strokeWidth="2" fill="none" /><path d="M5 13H19" stroke="#222" />
          </svg>
          <MenuNav>
            {menus.map((m) => (
              <MenuItem key={m} href="#" $active={m === "Start"}><u>{m[0]}</u>{m.slice(1)}</MenuItem>
            ))}
          </MenuNav>
          <WindowButtons>
            <WindowButton aria-label="Minimize">
              <svg width="10" height="10"><path d="M2 8H8" stroke="#70869c" strokeWidth="2" /></svg>
            </WindowButton>
            <WindowButton aria-label="Restore">
              <svg width="10" height="10"><path d="M4 4V2H9V6H7M1 5H6V9H1Z" fill="none" stroke="#70869c" strokeWidth="1" /></svg>
            </WindowButton>
            <WindowButton aria-label="Close">
              <svg width="10" height="10"><path d="M2 2L8 8M8 2L2 8" stroke="#70869c" strokeWidth="2" /></svg>
            </WindowButton>
          </WindowButtons>
        </MenuBar>

        <Body>
          <Viewport>
            <Model />
            <SpecificationTree />
            <Compass width="90" height="112" viewBox="1100 30 90 112">
              <g fill="#1c4060" stroke="#d2caff" strokeWidth="1.7">
                <path d="M1132 50C1155 57 1174 76 1173 99L1132 91Z" />
                <path d="M1132 50C1118 62 1113 86 1114 108L1132 91Z" />
                <path d="M1101 130L1119 112L1163 119C1172 128 1160 140 1132 140C1115 140 1104 136 1101 130Z" />
                <path d="M1132 40V124" />
              </g>
              <circle cx="1132" cy="39" r="3" fill="#dcc8ff" />
              <path d="M1128 120H1137V129H1128Z" fill="#d00000" />
              <g fill="#e8e040" fontFamily="Open Sans" fontSize="13">
                <text x="1136" y="46">z</text><text x="1177" y="107">y</text><text x="1119" y="115">x</text>
              </g>
            </Compass>
            <Triad width="92" height="64" viewBox="1141 590 92 64">
              <text x="1156" y="641" fontFamily="Open Sans" fontStyle="italic" fontWeight="600" fontSize="41" fill="#1b1a2a">JS</text>
              <text x="1196" y="643" fontFamily="Open Sans" fontStyle="italic" fontWeight="bold" fontSize="14" fill="#1b1a2a">iii</text>
              <path d="M1203 607V626L1224 630M1203 626L1196 631" fill="none" stroke="#fff" />
              <g fill="#fff" fontFamily="Open Sans" fontSize="12">
                <text x="1203" y="606">z</text><text x="1223" y="632">y</text><text x="1192" y="636">x</text>
              </g>
            </Triad>
            <ContextMenu>
              <ContextItem>
                <Glyph viewBox="0 0 24 24" opacity="0.6">{icons.shellNode}</Glyph>
                <span><u>S</u>hell...</span>
              </ContextItem>
              <Spinner width="32" height="32" viewBox="0 0 24 24" aria-hidden="true">
                <circle cx="12" cy="12" r="8" fill="none" stroke="#2b8fe9" strokeWidth="5" />
                <path d="M5 16C3 12 4 8 7 6" fill="none" stroke="#3cc4fa" strokeWidth="5" />
              </Spinner>
            </ContextMenu>
          </Viewport>

          <Dock>
            {dockGroups.map((g) => (
              <React.Fragment key={g.tools[0].id}>
                <DockGrip $size={g.grip} />
                {g.tools.map((t) => (
                  <DockButton key={t.id} aria-label={t.label} $drop={t.drop}>
                    <ToolIcon id={t.id} />
                    {t.drop && <DropMark />}
                  </DockButton>
                ))}
              </React.Fragment>
            ))}
            <More $down aria-label="More tools">»</More>
          </Dock>
        </Body>

        <ToolBar>
          {barGroups.map((g, i) => (
            <React.Fragment key={g[0].id}>
              <BarGrip $size={i === 0 ? 13 : 19} />
              <ToolGroup>
                {g.map((t) => (
                  <ToolButton key={t.id} aria-label={t.label} $drop={t.drop} $slim={t.slim}>
                    <ToolIcon id={t.id} />
                    {t.drop && <DropMark />}
                  </ToolButton>
                ))}
                {i === barGroups.length - 1 && (
                  <ToolButton aria-label="Mean Dimensions">
                    <Coordinates><b>10.1</b><b>10.0</b></Coordinates>
                  </ToolButton>
                )}
              </ToolGroup>
            </React.Fragment>
          ))}
          <More aria-label="More tools">»</More>
          <Brand width="44" height="36" viewBox="0 0 44 36" role="img" aria-label="CATIA">
            <path d="M8 3C15 1 18 3 13 7C11 9 10 9 10 9C15 9 14 13 10 15" fill="none" stroke="#d8222c" strokeWidth="1.8" />
            <text x="2" y="22" fontFamily="Liberation Sans" fontStyle="italic" fontWeight="bold" fontSize="14" fill="#23337c">D</text>
            <text x="13" y="22" fontFamily="Liberation Sans" fontStyle="italic" fontWeight="bold" fontSize="14" fill="#ee9a20">S</text>
            <text x="7" y="34" fontFamily="Liberation Sans" fontStyle="italic" fontWeight="bold" fontSize="10" fill="#23337c">CATIA</text>
          </Brand>
        </ToolBar>

        <StatusBar>
          <Message>Face/Pad.1/PartBody preselected</Message>
          <PowerLabel htmlFor="power-input">Inside,Outside</PowerLabel>
          <PowerInput id="power-input" defaultValue="5mm,0mm" />
          <StatusButton aria-label="Command window">
            <svg width="18" height="14"><path d="M2 2H13V11H2Z" fill="#d8d8dc" stroke="#000" strokeWidth="2" /><path d="M5 4H10V8H5Z" fill="#fff" stroke="#000" /><path d="M14 11H17" stroke="#000" strokeWidth="2" /></svg>
          </StatusButton>
          <StatusButton aria-label="Lock status">
            <svg width="18" height="16"><path d="M3 14V6C3 1 13 1 13 6V14Z" fill="#d6d5e2" stroke="#8d8c9e" /><path d="M8 5V11M5 8H11" stroke="#8d8c9e" /></svg>
            <Watermark>Udemy</Watermark>
          </StatusButton>
        </StatusBar>
      </Frame>
    </>
  );
}
